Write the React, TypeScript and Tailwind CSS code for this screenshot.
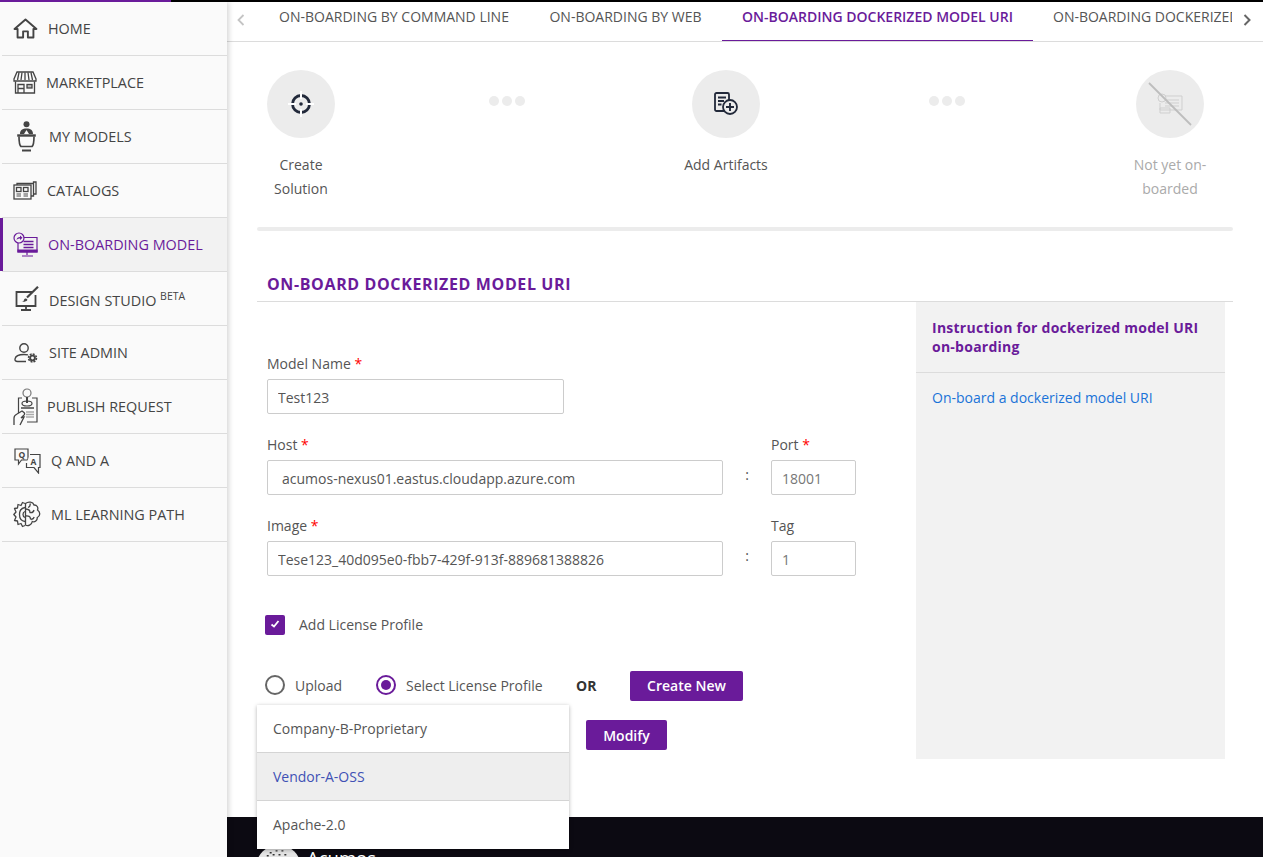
import type { ReactNode } from 'react';

const stroke = { fill: 'none', stroke: 'currentColor', strokeWidth: 1.5 } as const;

const HomeIcon = () => (
  <svg width="25" height="21" viewBox="0 0 26 22" {...stroke} strokeWidth={2}>
    <path d="M1.500 11.500 13 1.500l11.500 10h-3.200V20.500H15.500v-6.500h-5v6.500H4.700v-9z" strokeLinejoin="round" />
  </svg>
);

const MarketIcon = () => (
  <svg width="24" height="23" viewBox="0 0 24 23" {...stroke} strokeWidth={1.3}>
    <path d="M4 1h16l3 7v2H1V8z" />
    <path d="M6 1.500 4.500 9M9 1.500 8 9M12 1.500V9M15 1.500 16 9M18 1.500 19.500 9" />
    <path d="M2.500 10.500v11.500h19V10.500" />
    <path d="M5 22v-8.500h6V22M5 17.500h6" />
    <rect x="14" y="13.500" width="5" height="3.500" fill="#bbb" />
  </svg>
);

const ModelsIcon = () => (
  <svg width="21" height="31" viewBox="0 0 21 31" fill="none" stroke="currentColor" strokeWidth="1.700">
    <circle cx="10.500" cy="3.200" r="3" fill="currentColor" stroke="none" />
    <path d="M4 13c0-4 2.500-5.500 6.500-5.500S17 9 17 13H13l-2.500-4L8 13z" fill="currentColor" stroke="none" />
    <path d="M1.200 14.500h18.600" strokeWidth="2.400" />
    <path d="M3 15.500c0 5 .7 9 2 10h11c1.300-1 2-5 2-10" />
    <path d="M6 29.500h9" strokeWidth="2" />
  </svg>
);

const CatalogIcon = () => (
  <svg width="24" height="19" viewBox="0 0 24 19" {...stroke} strokeWidth={1.300}>
    <rect x="1" y="4" width="17" height="14" fill="#fafafa" />
    <path d="M4 4V2.500h16.500V15H18M20.500 2.500V1H23v12h-2.500" />
    <rect x="3.500" y="6.500" width="4.500" height="4" />
    <rect x="10.500" y="6.500" width="4.500" height="4" />
    <path d="M3.500 13h4.500M3.500 15h4.500M10.500 13H15M10.500 15H15" stroke="#888" strokeWidth="1.300" />
  </svg>
);

const BoardingIcon = () => (
  <svg width="25" height="25" viewBox="0 0 25 25" fill="none" stroke="currentColor" strokeWidth="1.200">
    <path d="M10 5.500h14v14.500H5V11" />
    <path d="M10.500 9.500h10M10.500 12.500h10M10.500 15.500h10" strokeWidth="1.400" />
    <path d="M5 18h19v2H5z" fill="currentColor" />
    <path d="M14 20v3M9 24h11" />
    <circle cx="6" cy="6" r="5" fill="#f2f2f2" />
    <path d="M3.500 8c.3-2 1.500-3 3.500-3V3.500L9.500 5.800 7 8V6.500c-1.500 0-2.500.5-3.500 1.500z" fill="currentColor" stroke="none" />
  </svg>
);

const DesignIcon = () => (
  <svg width="24" height="25" viewBox="0 0 24 25" fill="none" stroke="currentColor" strokeWidth="1.800">
    <path d="M17 6H1.500v14h19V9" />
    <path d="M11 20v3M6 24h10" strokeWidth="1.800" />
    <path d="M23 .8 12 11.500" strokeWidth="2.200" />
    <path d="M6.500 16c2 0 2-1 2.500-2.300.5-1.200 2-1.700 3-.7 1 1-.2 3-6 3z" fill="currentColor" stroke="none" />
  </svg>
);

const AdminIcon = () => (
  <svg width="24" height="20" viewBox="0 0 24 20" fill="none" stroke="currentColor" strokeWidth="1.400">
    <circle cx="10" cy="5" r="4.200" />
    <path d="M12 18.500H3.500C1.500 18.500.8 17.500 1 16c.5-3 3.500-4.500 9-4.500 1.500 0 3 .1 4 .4" />
    <circle cx="18.500" cy="15" r="4" strokeWidth="1.500" strokeDasharray="2 1.100" />
    <circle cx="18.500" cy="15" r="2.400" strokeWidth="1.900" />
  </svg>
);

const PublishIcon = () => (
  <svg width="25" height="38" viewBox="0 0 25 38" fill="none" stroke="currentColor" strokeWidth="1.200">
    <path d="M9 10H5.500v17M19 10h5v24H14" />
    <circle cx="14" cy="5" r="4" stroke="#777" />
    <path d="M14 9v6" strokeWidth="2" />
    <ellipse cx="14" cy="15.500" rx="5" ry="2.500" />
    <path d="M8 20h13" strokeWidth="1.500" />
    <path d="M13 24h8M13 26.500h8M13 29h8" stroke="#aaa" strokeWidth="1.400" />
    <path d="M1 37v-7c0-2 1-3 3-4l5-3 2 1.500c1 1 .8 2-.5 3L9 29l-1 1 3-1-4 8" fill="#fafafa" strokeWidth="1.300" />
  </svg>
);

const QaIcon = () => (
  <svg width="27" height="26" viewBox="0 0 27 26" fill="none" stroke="currentColor" strokeWidth="1.200">
    <path d="M1 1h13v11H7.500L4.500 16v-4H1z" />
    <path d="M16 6.500h10v13h-1.500V25l-4.500-5.500h-7.500V15" fill="#fafafa" />
    <text x="4.500" y="9.500" fontSize="8.500" fontWeight="700" fontFamily="'Open Sans', sans-serif" fill="currentColor" stroke="none">Q</text>
    <text x="16.500" y="16.500" fontSize="8.500" fontWeight="700" fontFamily="'Open Sans', sans-serif" fill="currentColor" stroke="none">A</text>
  </svg>
);

const BrainIcon = () => (
  <svg width="28" height="27" viewBox="0 0 28 27" fill="none" stroke="currentColor" strokeWidth="1.300">
    {/* gear half */}
    <path d="M12 2.500 9.500 1.500 8 4.500 5 3.500 4.500 7 1.500 7.500 3 11 .8 13.500 3 16 1.500 19.500 4.500 20 5 23.500 8 22.500 9.500 25.500 12 24.500" strokeLinejoin="round" />
    <path d="M12 6.500c-3.500.5-5.500 3.500-5.500 7s2 6.500 5.500 7" />
    <path d="M12 10.500c-1.500.5-2 1.700-2 3s.5 2.500 2 3" />
    {/* brain half */}
    <path d="M12.500 2.500c3-2.500 7.500-1.500 8.500 1.500 3-.2 4.500 2.500 3.500 5 3 2 3 6-.2 7.500.2 3-2.500 5-5 4-.5 3.500-4.500 5-6.800 3.500z" />
    <path d="M12.500 8c3 0 4.500 1 4.500 3.500 2 .5 3.500-.5 4-2.500M12.500 15c3-.5 5 .5 5 3 1.500.5 3 0 3.700-2M17 2.500c.5 2-.5 3.500-2 4" />
  </svg>
);

type NavItem = { label: ReactNode; icon: ReactNode; box: string; text?: string; active?: boolean };

const nav: NavItem[] = [
  { label: 'HOME', icon: <HomeIcon />, box: 'w-[35px]' },
  { label: 'MARKETPLACE', icon: <MarketIcon />, box: 'w-[33px]' },
  { label: 'MY MODELS', icon: <ModelsIcon />, box: 'w-[36px] pl-[3px]' },
  { label: 'CATALOGS', icon: <CatalogIcon />, box: 'w-[34px]' },
  { label: 'ON-BOARDING MODEL', icon: <BoardingIcon />, box: 'w-[35px]', active: true },
  {
    label: (
      <>
        DESIGN STUDIO <span className="align-[6px] text-[10.5px] leading-none">BETA</span>
      </>
    ),
    icon: <DesignIcon />,
    box: 'w-[36px] pl-[2px]',
    text: 'pt-[4px]',
  },
  { label: 'SITE ADMIN', icon: <AdminIcon />, box: 'w-[36px] pl-[1px]' },
  { label: 'PUBLISH REQUEST', icon: <PublishIcon />, box: 'w-[34px]' },
  { label: 'Q AND A', icon: <QaIcon />, box: 'w-[38px] pl-[1px]' },
  { label: 'ML LEARNING PATH', icon: <BrainIcon />, box: 'w-[38px]' },
];

function Sidebar() {
  return (
    <aside className="relative z-10 w-[227px] shrink-0 bg-[#fafafa] shadow-[2px_0_5px_rgba(0,0,0,0.16)]">
      {nav.map((item, i) => (
        <div
          key={i}
          className={`relative ml-[2px] flex h-[54px] items-center border-b border-[#dcdcdc] pl-[11px] text-[14.4px] font-medium ${
            item.active ? 'bg-[#f2f2f2] text-[#6a1b9a]' : 'text-[#444]'
          }`}
        >
          {item.active && <span className="absolute -left-[2px] top-0 bottom-0 w-[3px] bg-[#6a1b9a]" />}
          <span className={`flex shrink-0 items-center ${item.box}`}>{item.icon}</span>
          <span className={`whitespace-nowrap ${item.text ?? ''}`}>{item.label}</span>
        </div>
      ))}
    </aside>
  );
}

const tabs = [
  { label: 'ON-BOARDING BY COMMAND LINE', box: 'w-[270px]' },
  { label: 'ON-BOARDING BY WEB', box: 'w-[193px]' },
  { label: 'ON-BOARDING DOCKERIZED MODEL URI', box: 'w-[311px]', active: true },
  { label: 'ON-BOARDING DOCKERIZED MODEL', box: 'pl-[20px]' },
];

function Tabs() {
  return (
    <div className="flex h-[40px] border-b border-[#dcdcdc]">
      <div className="flex w-[32px] shrink-0 items-center pb-[3px] pl-[7px] text-[#c4c4c4]">
        <svg width="14" height="14" viewBox="0 0 14 14" fill="none" stroke="currentColor" strokeWidth="1.800">
          <path d="M9.500 2 4.500 7l5 5" />
        </svg>
      </div>
      <div className="flex min-w-0 flex-1 overflow-hidden">
        {tabs.map((t) => (
          <div
            key={t.label}
            className={`h-[40px] shrink-0 whitespace-nowrap pt-[5px] text-[14px] leading-[20px] ${t.box} ${
              t.active ? 'border-b-2 border-[#6a1b9a] text-center font-semibold text-[#6a1b9a]' : 'text-center text-[#555]'
            }`}
          >
            {t.label}
          </div>
        ))}
      </div>
      <div className="flex w-[31px] shrink-0 items-center justify-end pb-[3px] pr-[9px] text-[#666]">
        <svg width="14" height="14" viewBox="0 0 14 14" fill="none" stroke="currentColor" strokeWidth="2">
          <path d="M4.500 2 9.500 7l-5 5" />
        </svg>
      </div>
    </div>
  );
}

function Step({ icon, label, muted }: { icon: ReactNode; label: string; muted?: boolean }) {
  return (
    <div className={`flex w-[88px] shrink-0 flex-col items-center text-center text-[14px] leading-[24px] ${muted ? 'text-[#aaa]' : 'text-[#555]'}`}>
      <div className="flex h-[68px] w-[68px] items-center justify-center rounded-full bg-[#ececec]">{icon}</div>
      <div className="mt-[15px]">{label}</div>
    </div>
  );
}

function Dots({ box }: { box: string }) {
  return (
    <div className={`flex shrink-0 gap-[3px] pt-[26px] ${box}`}>
      <span className="h-[10px] w-[10px] rounded-full bg-[#ececec]" />
      <span className="h-[10px] w-[10px] rounded-full bg-[#ececec]" />
      <span className="h-[10px] w-[10px] rounded-full bg-[#ececec]" />
    </div>
  );
}

const TargetIcon = () => (
  <svg width="28" height="28" viewBox="0 0 28 28" fill="none">
    <circle cx="14" cy="14" r="8.500" stroke="#22293a" strokeWidth="2.800" />
    <circle cx="14" cy="14" r="1.800" fill="#22293a" />
    <path d="M14 1v8M14 19v8M1 14h8M19 14h8" stroke="#fff" strokeWidth="2" />
  </svg>
);

const ArtifactIcon = () => (
  <svg width="26" height="24" viewBox="0 0 26 24" fill="none" stroke="#22293a" strokeWidth="1.800">
    <path d="M12 19H3.500A1.500 1.500 0 0 1 2 17.500v-15A1.500 1.500 0 0 1 3.500 1h11A1.500 1.500 0 0 1 16 2.500V9" />
    <path d="M5 5.500h8M5 9h6M5 12.500h3.500" />
    <circle cx="17" cy="15" r="7" />
    <path d="M17 11v8M13 15h8" strokeWidth="1.900" />
  </svg>
);

const NotYetIcon = () => (
  <svg width="46" height="46" viewBox="0 0 46 46" fill="none" stroke="#cfcfcf" strokeWidth="1">
    <path d="M18 15h17v14H13v-7" />
    <path d="M18 19h14M18 22h14M18 25h14" />
    <circle cx="15" cy="17" r="4" fill="#ececec" />
    <path d="M13 27h10v5H13z" />
    <path d="M2 2 44 44" stroke="#bdbdbd" strokeWidth="1.800" />
  </svg>
);

function Label({ text, required }: { text: string; required?: boolean }) {
  return (
    <div className="mb-[5px] h-[20px] text-[14px] leading-[20px] text-[#555]">
      {text}
      {required && <span className="text-[#f00]"> *</span>}
    </div>
  );
}

function Field({ value, box, pad = 'px-[10px]' }: { value: string; box: string; pad?: string }) {
  return (
    <input
      readOnly
      value={value}
      className={`h-[35px] rounded-[2px] border border-[#ccc] bg-white pt-[1px] text-[14px] text-[#555] outline-none ${pad} ${box}`}
    />
  );
}

function PairRow({ left, right, leftValue, rightValue, leftPad, rightRequired }: {
  left: string;
  right: string;
  leftValue: string;
  rightValue: string;
  leftPad?: string;
  rightRequired?: boolean;
}) {
  return (
    <div className="mt-[21px] flex items-start">
      <div className="w-[456px]">
        <Label text={left} required />
        <Field value={leftValue} box="w-[456px]" pad={leftPad} />
      </div>
      <div className="w-[48px] pt-[28px] text-center text-[14px] leading-[24px] text-[#555]">:</div>
      <div>
        <Label text={right} required={rightRequired} />
        <Field value={rightValue} box="w-[85px] text-[#777]" />
      </div>
    </div>
  );
}

function Radio({ label, on, box }: { label: string; on?: boolean; box: string }) {
  return (
    <div className={`flex items-center text-[14px] text-[#555] ${box}`}>
      <span className={`flex h-[20px] w-[20px] shrink-0 items-center justify-center rounded-full border-2 ${on ? 'border-[#6a1b9a]' : 'border-[#666]'}`}>
        {on && <span className="h-[10px] w-[10px] rounded-full bg-[#6a1b9a]" />}
      </span>
      <span className="ml-[10px] whitespace-nowrap">{label}</span>
    </div>
  );
}

function Form() {
  return (
    <div className="relative w-[659px] shrink-0 pl-[10px] pt-[52px]">
      <Label text="Model Name" required />
      <Field value="Test123" box="block w-[297px]" />
      <PairRow left="Host" right="Port" leftValue="acumos-nexus01.eastus.cloudapp.azure.com" rightValue="18001" leftPad="px-[14px]" rightRequired />
      <PairRow left="Image" right="Tag" leftValue="Tese123_40d095e0-fbb7-429f-913f-889681388826" rightValue="1" />

      <div className="-ml-[2px] mt-[39px] flex h-[20px] items-center text-[14px] text-[#555]">
        <span className="flex h-[20px] w-[20px] items-center justify-center rounded-[2px] bg-[#6a1b9a]">
          <svg width="12" height="12" viewBox="0 0 12 12" fill="none" stroke="#fff" strokeWidth="1.800" className="-mt-[3px]">
            <path d="M2.500 6.500 5 8.500l4.500-5.500" />
          </svg>
        </span>
        <span className="ml-[14px] pb-[2px]">Add License Profile</span>
      </div>

      <div className="-ml-[2px] mt-[36px] flex h-[30px] items-center">
        <div className="flex items-center pb-[2px]">
          <Radio label="Upload" box="w-[111px]" />
          <Radio label="Select License Profile" on box="w-[200px]" />
          <span className="w-[54px] text-[14px] font-bold text-[#333]">OR</span>
        </div>
        <button className="h-[30px] w-[113px] rounded-[2px] bg-[#6a1b9a] pb-[2px] text-[14px] font-semibold text-white">Create New</button>
      </div>

      <div className="ml-[319px] mt-[19px] flex">
        <button className="h-[30px] w-[81px] rounded-[2px] bg-[#6a1b9a] text-[14px] font-semibold text-white">Modify</button>
      </div>

      {/* license profile dropdown, opens over the footer */}
      <div className="absolute left-0 top-[403px] z-20 w-[312px] bg-white text-[14px] text-[#555] shadow-[0_1px_4px_rgba(0,0,0,0.3)]">
        <div className="flex h-[48px] items-center border-b border-[#d4d4d4] px-[16px]">Company-B-Proprietary</div>
        <div className="flex h-[48px] items-center border-b border-[#d4d4d4] bg-[#eeeeee] px-[16px] text-[#3f51b5]">Vendor-A-OSS</div>
        <div className="flex h-[48px] items-center px-[16px] pb-[2px]">Apache-2.0</div>
      </div>
    </div>
  );
}

function Panel() {
  return (
    <div className="h-[457px] w-[309px] shrink-0 bg-[#f2f2f2]">
      <div className="h-[71px] border-b border-[#dcdcdc] px-[16px] pt-[16px] text-[14px] font-bold leading-[19px] tracking-[0.25px] text-[#6a1b9a]">
        Instruction for dockerized model URI on-boarding
      </div>
      <div className="px-[16px] pt-[15px] text-[14px] leading-[20px] text-[#1a73d8]">On-board a dockerized model URI</div>
    </div>
  );
}

function Footer() {
  return (
    <footer className="-ml-[1px] h-[40px] overflow-hidden bg-[#0c0a12] pl-[30px] pt-[28px]">
      <div className="flex items-start gap-[6px]">
        <svg width="45" height="45" viewBox="0 0 46 46">
          <circle cx="23" cy="23" r="23" fill="#e4e4e4" />
          <path d="M14 8h2M20 6h2M26 6h2M17 10h2M23 10h2M29 10h2M11 11h2" stroke="#333" strokeWidth="1.500" />
        </svg>
        <span className="mt-[1px] text-[18.5px] leading-[24px] text-white">Acumos</span>
      </div>
    </footer>
  );
}

export default function App() {
  return (
    <div className="relative h-[857px] w-[1263px] overflow-hidden bg-white font-['Open_Sans',sans-serif]">
      <div className="relative z-20 h-[2px] bg-black">
        <div className="h-[2px] w-[171px] bg-[#6a1b9a]" />
      </div>
      <div className="flex h-[855px]">
        <Sidebar />
        <main className="min-w-0 flex-1">
          <Tabs />
          <div className="pl-[30px] pr-[30px]">
            <div className="mt-[28px] flex h-[131px]">
              <Step icon={<TargetIcon />} label="Create Solution" />
              <Dots box="w-[337px] pl-[144px]" />
              <Step icon={<ArtifactIcon />} label="Add Artifacts" />
              <Dots box="w-[356px] pl-[159px]" />
              <Step icon={<NotYetIcon />} label="Not yet on-boarded" muted />
            </div>
            <div className="mt-[26px] h-[4px] rounded-full bg-[#ececec]" />
            <div className="flex h-[71px] items-end border-b border-[#dcdcdc] pb-[5px] pl-[10px] text-[16px] font-bold leading-[24px] tracking-[0.62px] text-[#6a1b9a]">
              ON-BOARD DOCKERIZED MODEL URI
            </div>
            <div className="flex">
              <Form />
              <Panel />
            </div>
          </div>
          <div className="mt-[58px]">
            <Footer />
          </div>
        </main>
      </div>
    </div>
  );
}
